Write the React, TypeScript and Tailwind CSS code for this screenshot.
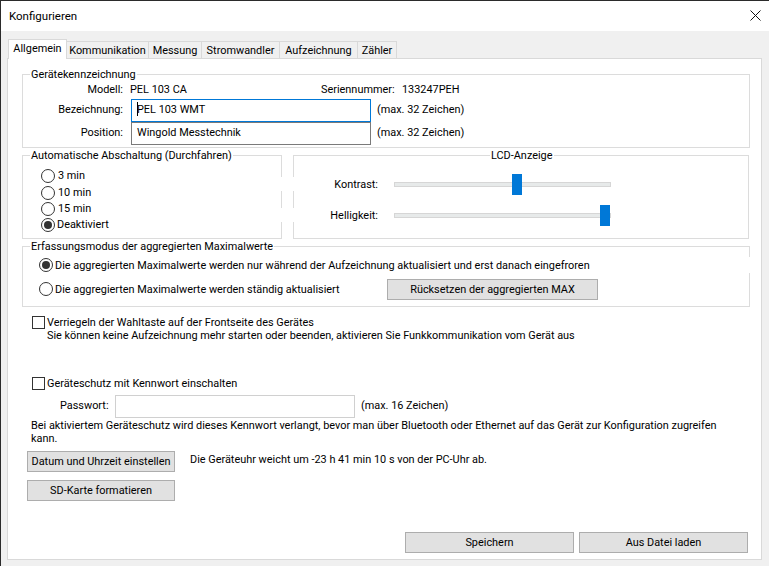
import type { ReactNode } from 'react';

const tabs = [
  { label: 'Kommunikation', width: 'w-[82px]' },
  { label: 'Messung', width: 'w-[53px]' },
  { label: 'Stromwandler', width: 'w-[78px]' },
  { label: 'Aufzeichnung', width: 'w-[78px]' },
  { label: 'Zähler', width: 'w-[39px]' },
];

function GroupBox({ title, className, children }: { title: string; className: string; children: ReactNode }) {
  return (
    <div className={`relative border border-[#dcdcdc] ${className}`}>
      <span className="absolute -top-[7px] left-[7px] bg-white px-[1px] leading-[14px] whitespace-nowrap">{title}</span>
      {children}
    </div>
  );
}

function Radio({ checked, label, gap, className }: { checked?: boolean; label: string; gap: string; className: string }) {
  return (
    <div className={`flex items-center ${className}`}>
      <div className="flex h-[14px] w-[14px] items-center justify-center rounded-full border border-[#333333] bg-white">
        {checked && <div className="h-[8px] w-[8px] rounded-full bg-[#333333]" />}
      </div>
      <span className={`whitespace-nowrap ${gap}`}>{label}</span>
    </div>
  );
}

function Slider({ label, thumb, className }: { label: string; thumb: string; className: string }) {
  return (
    <div className={`flex items-center ${className}`}>
      <span className="w-[84px] pt-[2px] text-right">{label}</span>
      <div className="relative ml-[16px] h-[5px] w-[217px] border border-[#d6d6d6] bg-[#e7eaea]">
        <div className={`absolute -top-[9px] h-[21px] w-[10px] bg-[#0078d7] ${thumb}`} />
      </div>
    </div>
  );
}

function Button({ label, className }: { label: string; className: string }) {
  return (
    <button className={`h-[21px] border border-[#adadad] bg-[#e1e1e1] leading-[18px] whitespace-nowrap ${className}`}>
      {label}
    </button>
  );
}

export default function App() {
  return (
    <div className="flex h-[566px] w-[769px] flex-col overflow-hidden border-t border-l border-[#2b2b2b] bg-[#f0f0f0] font-['Roboto',sans-serif] text-[10.9px] text-black">
      {/* Title bar */}
      <div className="flex h-[30px] shrink-0 items-center justify-between bg-white pr-[8px] pl-[8px]">
        <span className="pt-[2px] text-[11.5px]">Konfigurieren</span>
        <svg width="11" height="11" viewBox="0 0 11 11" className="mb-[2px]">
          <path d="M0.5 0.5 L10.5 10.5 M10.5 0.5 L0.5 10.5" stroke="#111111" strokeWidth="1" />
        </svg>
      </div>

      {/* Tabs */}
      <div className="flex h-[27px] shrink-0 items-end pl-[7px]">
        <div className="relative z-10 -mb-[1px] flex h-[20px] w-[59px] items-center justify-center border border-b-0 border-[#d9d9d9] bg-white">
          Allgemein
        </div>
        {tabs.map((tab) => (
          <div
            key={tab.label}
            className={`flex h-[17px] items-center justify-center border border-b-0 border-l-0 border-[#d9d9d9] bg-[#f0f0f0] pt-[2px] ${tab.width}`}
          >
            {tab.label}
          </div>
        ))}
      </div>

      {/* Tab page */}
      <div className="mr-[7px] mb-[6px] ml-[6px] flex flex-1 flex-col border border-[#d9d9d9] bg-white pt-[15px] pl-[14px]">
        <GroupBox title="Gerätekennzeichnung" className="h-[74px] w-[728px]">
          <div className="flex h-[24px] items-center pt-[6px]">
            <span className="w-[100px] text-right">Modell:</span>
            <span className="ml-[7px] w-[191px]">PEL 103 CA</span>
            <span className="w-[72px] whitespace-nowrap">Seriennummer:</span>
            <span className="ml-[9px]">133247PEH</span>
          </div>
          <div className="flex h-[23px] items-center">
            <span className="w-[100px] text-right">Bezeichnung:</span>
            <div className="relative ml-[8px] flex h-[23px] w-[240px] items-center border border-[#0078d7] pl-[5px]">
              <div className="absolute top-[2px] left-[5px] h-[14px] w-[1px] bg-black" />
              PEL 103 WMT
            </div>
            <span className="ml-[6px]">(max. 32 Zeichen)</span>
          </div>
          <div className="flex h-[23px] items-center">
            <span className="w-[100px] text-right">Position:</span>
            <div className="ml-[8px] flex h-[23px] w-[240px] items-center border border-[#7a7a7a] pl-[5px]">
              Wingold Messtechnik
            </div>
            <span className="ml-[6px]">(max. 32 Zeichen)</span>
          </div>
        </GroupBox>

        <div className="mt-[7px] flex gap-[11px]">
          <GroupBox title="Automatische Abschaltung (Durchfahren)" className="h-[84px] w-[260px]">
            <Radio label="3 min" gap="ml-[3px]" className="mt-[12px] ml-[18px] h-[16px]" />
            <Radio label="10 min" gap="ml-[3px] pt-[1px]" className="ml-[18px] h-[17px]" />
            <Radio label="15 min" gap="ml-[3px]" className="ml-[18px] h-[16px]" />
            <Radio checked label="Deaktiviert" gap="ml-[2px]" className="ml-[18px] h-[16px]" />
            <div className="absolute top-[21px] -right-[1px] h-[14px] w-[1px] bg-white" />
            <div className="absolute top-[52px] -right-[1px] h-[14px] w-[1px] bg-white" />
          </GroupBox>
          <div className="relative h-[84px] w-[456px] border border-[#dcdcdc]">
            <span className="absolute -top-[7px] left-[196px] bg-white px-[1px] leading-[14px] whitespace-nowrap">LCD-Anzeige</span>
            <Slider label="Kontrast:" thumb="left-[117px]" className="mt-[18px] h-[21px]" />
            <Slider label="Helligkeit:" thumb="left-[205px]" className="mt-[10px] h-[21px]" />
            <div className="absolute top-[21px] -left-[1px] h-[14px] w-[1px] bg-white" />
            <div className="absolute top-[52px] -left-[1px] h-[14px] w-[1px] bg-white" />
          </div>
        </div>

        <GroupBox title="Erfassungsmodus der aggregierten Maximalwerte" className="mt-[7px] h-[61px] w-[728px]">
          <Radio checked label="Die aggregierten Maximalwerte werden nur während der Aufzeichnung aktualisiert und erst danach eingefroren" gap="ml-[2px] pt-[2px]" className="mt-[10px] ml-[16px] h-[16px]" />
          <div className="mt-[6px] flex h-[21px] items-center">
            <Radio label="Die aggregierten Maximalwerte werden ständig aktualisiert" gap="ml-[2px] pt-[2px]" className="ml-[16px] w-[348px]" />
            <Button label="Rücksetzen der aggregierten MAX" className="w-[211px]" />
          </div>
          <div className="absolute top-[10px] -right-[1px] h-[16px] w-[1px] bg-white" />
        </GroupBox>

        <div className="mt-[9px] ml-[10px] flex">
          <div className="h-[13px] w-[13px] border border-[#333333]" />
          <div className="ml-[2px] leading-[13px]">
            <div>Verriegeln der Wahltaste auf der Frontseite des Gerätes</div>
            <div>Sie können keine Aufzeichnung mehr starten oder beenden, aktivieren Sie Funkkommunikation vom Gerät aus</div>
          </div>
        </div>

        <div className="mt-[35px] ml-[10px] flex h-[13px] items-center">
          <div className="h-[13px] w-[13px] border border-[#333333]" />
          <span className="ml-[2px] pt-[2px]">Geräteschutz mit Kennwort einschalten</span>
        </div>

        <div className="mt-[5px] flex h-[23px] items-center">
          <span className="ml-[38px] w-[48px]">Passwort:</span>
          <div className="ml-[7px] h-[23px] w-[240px] border border-[#d0d0d0]" />
          <span className="ml-[6px]">(max. 16 Zeichen)</span>
        </div>

        <p className="mt-[1px] ml-[9px] w-[700px] leading-[13px]">
          Bei aktiviertem Geräteschutz wird dieses Kennwort verlangt, bevor man über Bluetooth oder Ethernet auf das Gerät zur Konfiguration zugreifen kann.
        </p>

        <div className="mt-[6px] ml-[5px] flex">
          <Button label="Datum und Uhrzeit einstellen" className="w-[148px]" />
          <span className="ml-[15px] leading-[18px]">Die Geräteuhr weicht um -23 h 41 min 10 s von der PC-Uhr ab.</span>
        </div>
        <Button label="SD-Karte formatieren" className="mt-[8px] ml-[5px] w-[148px]" />

        <div className="mt-[31px] ml-[383px] flex gap-[5px]">
          <Button label="Speichern" className="w-[169px]" />
          <Button label="Aus Datei laden" className="w-[169px]" />
        </div>
      </div>
    </div>
  );
}
